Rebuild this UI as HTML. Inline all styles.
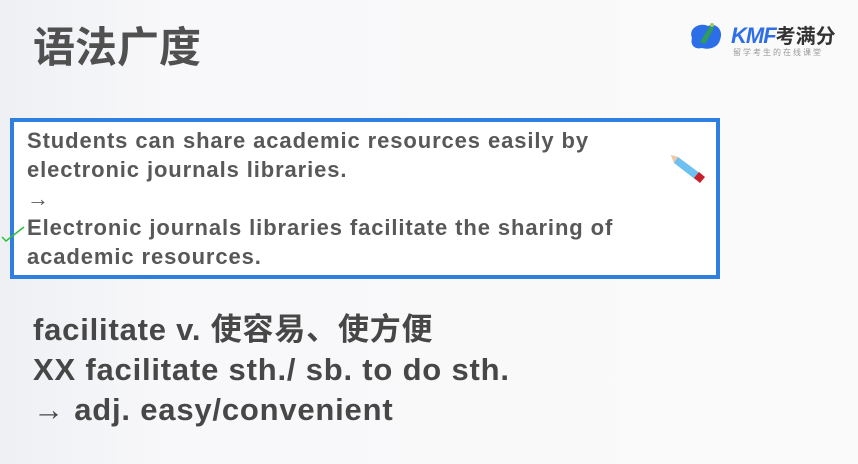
<!DOCTYPE html>
<html><head><meta charset="utf-8"><style>
html,body{margin:0;padding:0}
body{width:858px;height:464px;overflow:hidden;position:relative;background:linear-gradient(90deg,#eef0f4 0%,#f8f8fa 20%,#fafafa 100%);font-family:"Liberation Sans","Noto Sans CJK SC",sans-serif;font-weight:bold;color:#555}
.title{position:absolute;left:33px;top:18px;font-size:42px;color:#505050;font-family:"Noto Sans CJK SC",sans-serif;font-weight:bold;line-height:54px}
.box{position:absolute;left:10px;top:118px;width:702px;height:153px;border:4px solid #2f7fe0;background:#fff}
.bt{position:absolute;left:13px;top:4px;font-size:22px;line-height:29px;color:#585858;letter-spacing:0.9px}
.bot{position:absolute;left:33px;top:310px;font-size:31px;line-height:40px;color:#474747;letter-spacing:0.8px}
</style></head><body>
<div class="title">语法广度</div>
<div style="position:absolute;left:686px;top:18px;width:38px;height:34px">
<svg width="40" height="36" viewBox="0 0 40 36"><path d="M6 20 C2 10 14 4 22 8 C30 4 38 12 34 22 C32 30 22 32 16 30 C8 32 4 26 6 20Z" fill="#2b6ee8"/><path d="M14 24 L24 8 L28 10 L19 26Z" fill="#2f9c5a"/><circle cx="26" cy="7" r="2" fill="#9c6"/></svg></div>
<div style="position:absolute;left:731px;top:20px;font-size:22px;font-style:italic;color:#2e6fe6;letter-spacing:-1px">KMF<span style="color:#333;font-style:normal;font-size:20px;letter-spacing:0">考满分</span></div>
<div style="position:absolute;left:733px;top:47px;font-size:8px;color:#999;font-weight:normal;letter-spacing:2px">留学考生的在线课堂</div>
<div class="box"><div class="bt">Students can share academic resources easily by<br>electronic journals libraries.<br><span style="font-weight:normal">→</span><br>Electronic journals libraries facilitate the sharing of<br>academic resources.</div></div>
<svg style="position:absolute;left:0;top:215px" width="30" height="30"><path d="M2 22 L6 26 L24 12" stroke="#2fbf3a" stroke-width="1.5" fill="none"/></svg>
<svg style="position:absolute;left:668px;top:152px" width="40" height="34" viewBox="0 0 40 34"><path d="M3 3 L10 5 L33 22 L28 28 L6 11Z" fill="#6ec0f0"/><path d="M3 3 L10 5 L6 11Z" fill="#f0c9a0"/><path d="M31 20 L37 25 L32 31 L26 26Z" fill="#c8202a"/></svg>
<div class="bot">facilitate v. 使容易、使方便<br>XX facilitate sth./ sb. to do sth.<br><span style="font-weight:normal">→</span> adj. easy/convenient</div>
</body></html>
